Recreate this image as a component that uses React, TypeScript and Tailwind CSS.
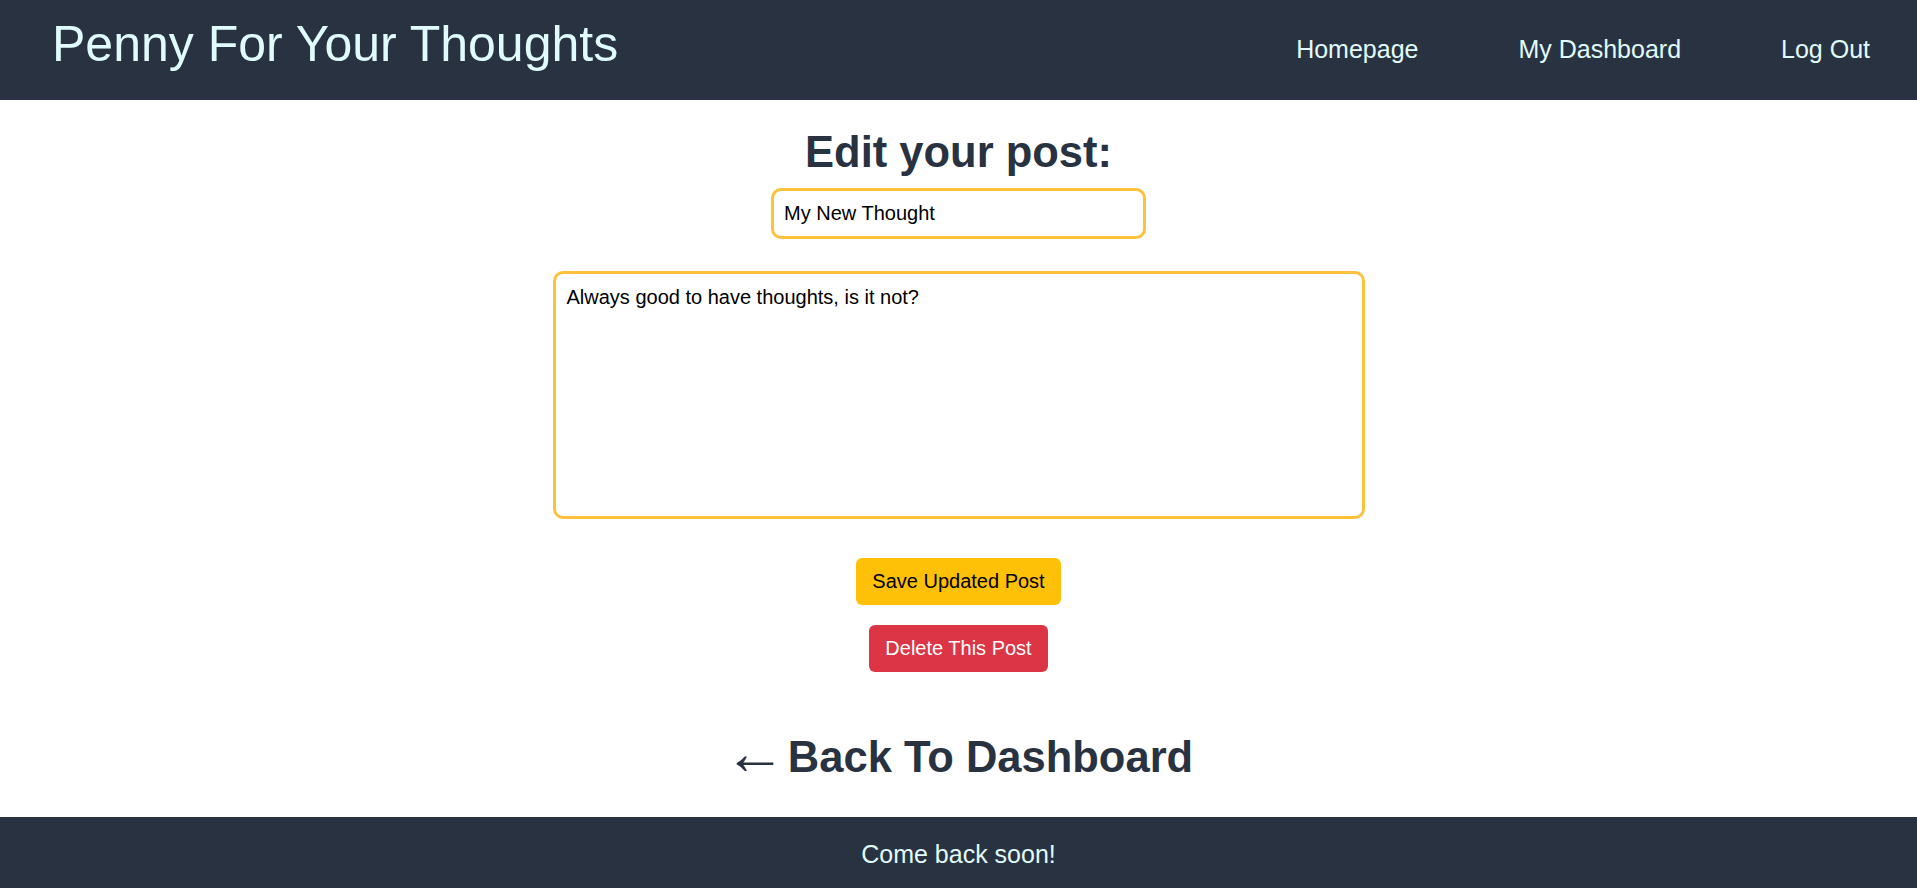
import { useState } from "react";

const navLinks = ["Homepage", "My Dashboard", "Log Out"];

function Header() {
  return (
    <header className="h-[100px] w-full flex justify-between items-start bg-[#293241] pl-[52px] pr-[47px]">
      <h1 className="mt-[16px] text-[50px] leading-[1.149] text-[#e0fbfc] whitespace-nowrap">
        Penny For Your Thoughts
      </h1>
      <nav className="mt-[35px] flex gap-[100px]">
        {navLinks.map((link) => (
          <a key={link} href="#" className="text-[25px] leading-[1.149] text-[#e0fbfc] whitespace-nowrap">
            {link}
          </a>
        ))}
      </nav>
    </header>
  );
}

function EditPost() {
  const [title, setTitle] = useState("My New Thought");
  const [body, setBody] = useState("Always good to have thoughts, is it not?");

  return (
    <main className="flex-1 w-full flex flex-col items-center">
      <h2 className="mt-[28px] text-[43.5px] font-bold leading-[1.149] text-[#293241]">Edit your post:</h2>
      <input
        value={title}
        onChange={(e) => setTitle(e.target.value)}
        className="mt-[10px] w-[375px] h-[51px] px-[10px] border-[3px] border-[#fdc13d] rounded-[10px] text-[20px] text-black outline-none"
      />
      <textarea
        value={body}
        onChange={(e) => setBody(e.target.value)}
        className="mt-[32px] w-[812px] h-[248px] px-[11px] py-[12px] border-[3px] border-[#fdc13d] rounded-[10px] text-[20px] leading-[1.149] text-black outline-none resize-none"
      />
      <button className="mt-[39px] px-4 py-3 rounded-md bg-[#ffc107] text-[20px] leading-[23px] text-black">
        Save Updated Post
      </button>
      <button className="mt-[20px] px-4 py-3 rounded-md bg-[#dc3545] text-[20px] leading-[23px] text-white">
        Delete This Post
      </button>
      <a href="#" className="mt-[61px] text-[43.5px] font-bold leading-[1.149] text-[#293241] whitespace-nowrap">
        <span className="font-normal text-[62px] leading-[0] align-[-2px] mr-[2px]">←</span>
        <span>Back To Dashboard</span>
      </a>
    </main>
  );
}

export default function App() {
  return (
    <div className="min-h-screen flex flex-col bg-white font-['Liberation_Sans',Arial,sans-serif]">
      <Header />
      <EditPost />
      <footer className="h-[71px] w-full bg-[#293241] flex justify-center pt-[23px]">
        <p className="text-[25px] leading-[1.149] text-[#e0fbfc]">Come back soon!</p>
      </footer>
    </div>
  );
}
